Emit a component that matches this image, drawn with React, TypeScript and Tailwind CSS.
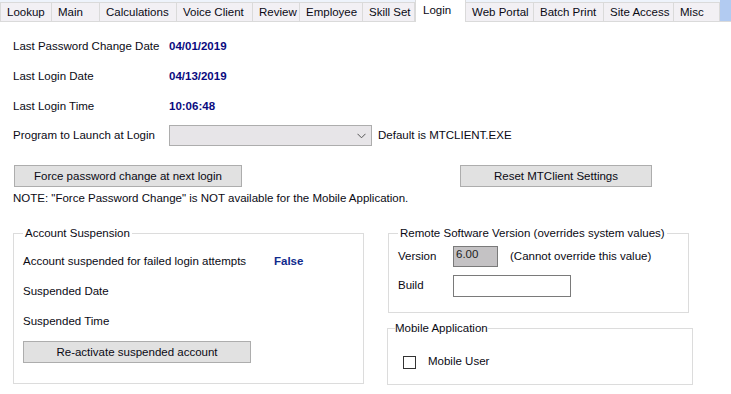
import React from 'react';

type Tab = { label: string; width: number };

const tabs: Tab[] = [
  { label: 'Lookup', width: 52 },
  { label: 'Main', width: 49 },
  { label: 'Calculations', width: 78 },
  { label: 'Voice Client', width: 77 },
  { label: 'Review', width: 48 },
  { label: 'Employee', width: 64 },
  { label: 'Skill Set', width: 53 },
  { label: 'Login', width: 51 },
  { label: 'Web Portal', width: 69 },
  { label: 'Batch Print', width: 71 },
  { label: 'Site Access', width: 71 },
  { label: 'Misc', width: 47 },
];

const ACTIVE = 'Login';

function TabStrip() {
  return (
    <div className="flex h-[22px] items-end bg-[#eef3fb] whitespace-nowrap">
      <div className="w-px h-[19px] border-b border-[#dadada]" />
      {tabs.map((tab) =>
        tab.label === ACTIVE ? (
          <div
            key={tab.label}
            style={{ width: tab.width }}
            className="h-[22px] bg-white border-x border-[#dadada] pl-[7px] pt-[2px] leading-[16px] shrink-0 overflow-hidden"
          >
            {tab.label}
          </div>
        ) : (
          <div
            key={tab.label}
            style={{ width: tab.width }}
            className="h-[20px] bg-[#f2f0f4] border border-[#dadada] -ml-px first:ml-0 pl-[6px] leading-[19px] shrink-0 overflow-hidden"
          >
            {tab.label}
          </div>
        )
      )}
      <div className="flex-1 h-[22px] bg-[#b2cbf1] border-b border-[#dadada]" />
    </div>
  );
}

function InfoRow({ label, value }: { label: string; value: string }) {
  return (
    <div className="flex items-center h-[30px] pt-px">
      <span className="w-[156px]">{label}</span>
      <span className="font-bold text-[#0a0a80]">{value}</span>
    </div>
  );
}

function WinButton({ children, className }: { children: React.ReactNode; className: string }) {
  return (
    <button
      type="button"
      className={`h-[22px] bg-[#e1e1e1] border border-[#adadad] text-center leading-[20px] ${className}`}
    >
      {children}
    </button>
  );
}

export default function App() {
  return (
    <div
      className="w-[731px] h-[394px] bg-white text-[11.5px] text-[#0a0a14] overflow-hidden"
      style={{ fontFamily: '"Segoe UI", "Liberation Sans", Arial, sans-serif' }}
    >
      <TabStrip />

      <div className="pl-[13px] pt-[9px]">
        <InfoRow label="Last Password Change Date" value="04/01/2019" />
        <InfoRow label="Last Login Date" value="04/13/2019" />
        <InfoRow label="Last Login Time" value="10:06:48" />

        <div className="flex items-center h-[29px]">
          <span className="w-[156px]">Program to Launch at Login</span>
          <div className="w-[203px] h-[21px] bg-[#e7e5e8] border border-[#adadad] flex items-center justify-end pr-[5px]">
            <svg width="9" height="6" viewBox="0 0 9 6" fill="none">
              <path d="M0.5 0.8L4.5 4.8L8.5 0.8" stroke="#555" strokeWidth="1" />
            </svg>
          </div>
          <span className="ml-[6px]">Default is MTCLIENT.EXE</span>
        </div>

        <div className="flex mt-[15px]">
          <WinButton className="ml-px w-[228px]">Force password change at next login</WinButton>
          <WinButton className="ml-[218px] w-[192px]">Reset MTClient Settings</WinButton>
        </div>
        <div className="h-[16px] leading-[16px] mt-[3px]">
          NOTE: &quot;Force Password Change&quot; is NOT available for the Mobile Application.
        </div>

        <div className="flex mt-[19px] items-start">
          <fieldset className="w-[351px] h-[159px] border border-[#dcdcdc] pl-[9px]">
            <legend className="px-[2px] leading-[16px]">Account Suspension</legend>
            <div className="flex items-center h-[30px] mt-[6px]">
              <span className="w-[251px]">Account suspended for failed login attempts</span>
              <span className="font-bold text-[#0f2a8c]">False</span>
            </div>
            <div className="flex items-center h-[30px]">Suspended Date</div>
            <div className="flex items-center h-[30px]">Suspended Time</div>
            <WinButton className="mt-[4px] w-[228px]">Re-activate suspended account</WinButton>
          </fieldset>

          <div className="ml-[23px] flex flex-col">
            <fieldset className="ml-px w-[301px] h-[88px] border border-[#dcdcdc] pl-[9px]">
              <legend className="px-[2px] leading-[16px]">
                Remote Software Version (overrides system values)
              </legend>
              <div className="flex items-center h-[21px] mt-[5px]">
                <span className="w-[55px]">Version</span>
                <div className="w-[45px] h-[21px] bg-[#c4c2c4] border border-[#7a7a7a] pl-[2px] leading-[15px] text-[#222]">
                  6.00
                </div>
                <span className="ml-[12px]">(Cannot override this value)</span>
              </div>
              <div className="flex items-center h-[22px] mt-[8px]">
                <span className="w-[55px]">Build</span>
                <div className="w-[118px] h-[22px] bg-white border border-[#7a7a7a]" />
              </div>
            </fieldset>

            <fieldset className="mt-[7px] w-[306px] h-[65px] border border-[#dcdcdc] pl-[7px]">
              <legend className="leading-[16px]">Mobile Application</legend>
              <div className="flex items-center h-[20px] mt-[16px] ml-[8px]">
                <span className="w-[13px] h-[13px] border border-[#333] bg-white" />
                <span className="ml-[12px]">Mobile User</span>
              </div>
            </fieldset>
          </div>
        </div>
      </div>
    </div>
  );
}
